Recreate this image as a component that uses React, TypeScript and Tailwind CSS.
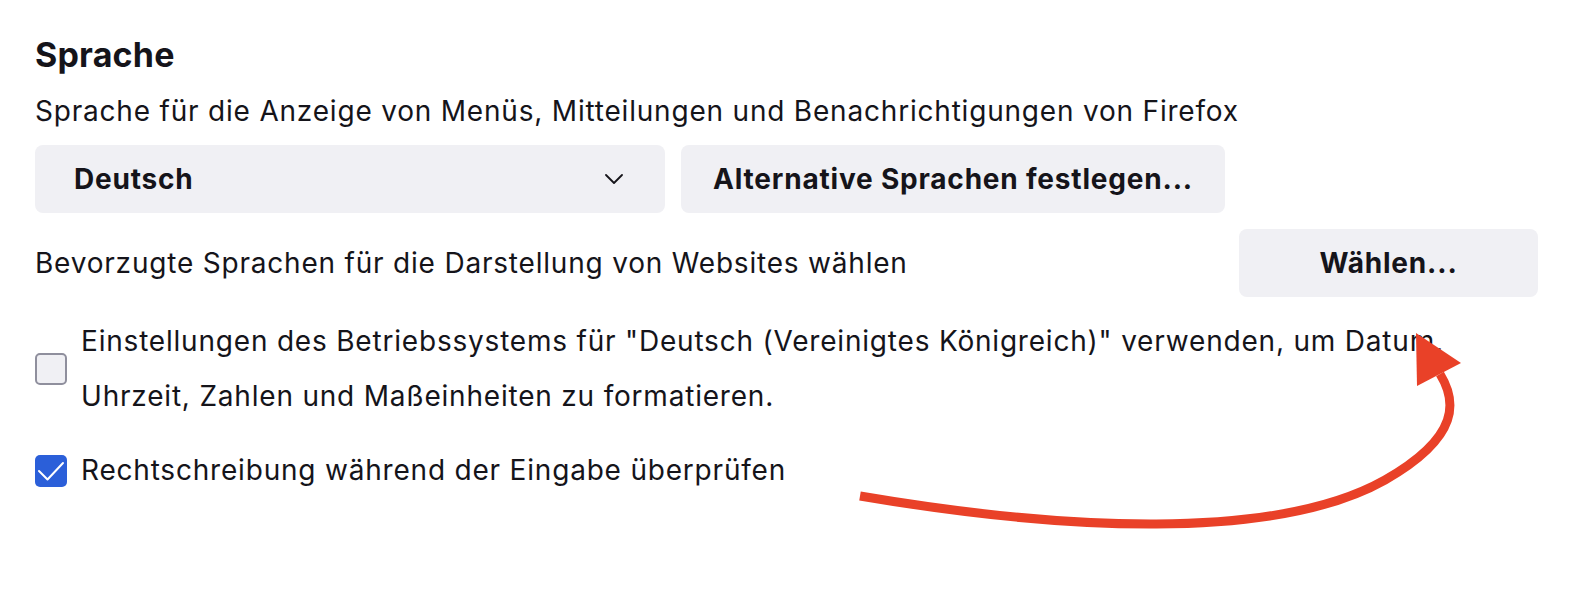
import React from "react";

export default function App() {
  return (
    <div className="relative w-[1594px] h-[590px] bg-white text-[#15141a] font-['Inter',sans-serif] overflow-hidden">
      <div className="w-[1538px] pl-[35px] pt-[35px] flex flex-col">
        <h1 className="text-[34px] leading-[40px] font-bold tracking-[0.2px]">Sprache</h1>
        <p className="mt-[18px] text-[28px] leading-[36px] tracking-[0.8px]">
          Sprache für die Anzeige von Menüs, Mitteilungen und Benachrichtigungen von Firefox
        </p>
        <div className="mt-[16px] flex gap-[16px]">
          <div className="w-[630px] h-[68px] rounded-[8px] bg-[#f0f0f4] flex items-center justify-between pl-[39px] pr-[42px]">
            <span className="text-[28px] font-bold tracking-[0.8px]">Deutsch</span>
            <svg width="18" height="10" viewBox="0 0 18 10" fill="none">
              <polyline points="1,1 9,9 17,1" stroke="#15141a" strokeWidth="1.8" strokeLinecap="round" strokeLinejoin="round" />
            </svg>
          </div>
          <button className="h-[68px] rounded-[8px] bg-[#f0f0f4] px-[32px] text-[28px] font-bold tracking-[0.8px]">
            Alternative Sprachen festlegen...
          </button>
        </div>
        <div className="mt-[16px] flex items-center justify-between">
          <span className="text-[28px] leading-[36px] tracking-[0.8px]">
            Bevorzugte Sprachen für die Darstellung von Websites wählen
          </span>
          <button className="w-[299px] h-[68px] rounded-[8px] bg-[#f0f0f4] text-[28px] font-bold tracking-[0.8px]">
            Wählen...
          </button>
        </div>
        <div className="mt-[17px] flex items-center gap-[14px]">
          <div className="w-[32px] h-[32px] shrink-0 rounded-[5px] border-2 border-[#8f8f9d] bg-[#f0f0f4]" />
          <p className="text-[28px] leading-[55px] tracking-[0.8px]">
            Einstellungen des Betriebssystems für "Deutsch (Vereinigtes Königreich)" verwenden, um Datum,
            <br />
            Uhrzeit, Zahlen und Maßeinheiten zu formatieren.
          </p>
        </div>
        <div className="mt-[19px] flex items-center gap-[14px]">
          <div className="w-[32px] h-[32px] shrink-0 rounded-[5px] bg-[#2b5fd9] flex items-center justify-center">
            <svg width="32" height="32" viewBox="0 0 32 32" fill="none">
              <polyline points="4,16 12.5,24.5 28,8" stroke="#ffffff" strokeWidth="2" strokeLinecap="round" strokeLinejoin="round" />
            </svg>
          </div>
          <span className="text-[28px] leading-[55px] tracking-[0.8px]">Rechtschreibung während der Eingabe überprüfen</span>
        </div>
      </div>
      <svg className="absolute left-0 top-0 pointer-events-none" width="1594" height="590" viewBox="0 0 1594 590" fill="none">
        <path
          d="M 860 496 C 1060 530, 1275 542, 1385 480 C 1462 436, 1456 400, 1440 374"
          stroke="#e94128"
          strokeWidth="9"
          strokeLinecap="butt"
          fill="none"
        />
        <polygon points="1416,333 1461,363 1417,386" fill="#e94128" />
      </svg>
    </div>
  );
}
